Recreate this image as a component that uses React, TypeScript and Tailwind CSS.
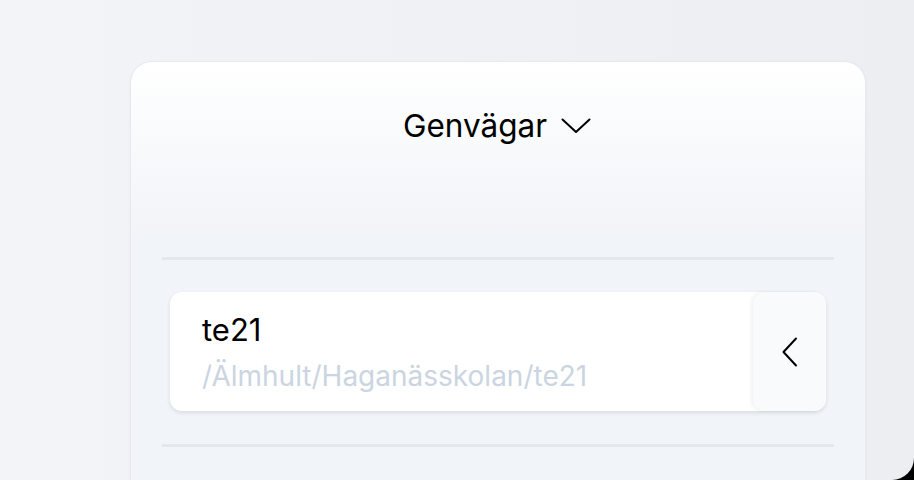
import React from "react";

export default function App() {
  return (
    <div className="w-[914px] h-[480px] bg-black overflow-hidden" style={{ fontFamily: "Inter, 'Noto Sans', sans-serif" }}>
      <div className="w-full h-full rounded-br-[22px] bg-gradient-to-r from-[#f3f4f7] to-[#eceef2] pt-[61px] pl-[130px] overflow-hidden">
        <div className="w-[736px] h-[440px] rounded-t-[22px] border border-[#e6e9ee] bg-gradient-to-b from-white to-[#f1f4f8] to-[40%] shadow-[0_1px_3px_rgba(0,0,0,0.04)] px-[31px]">
          <div className="h-[195px] pt-[44px] flex justify-center">
            <div className="flex items-center gap-[14px] h-[40px] text-black mr-[2px]">
              <span className="text-[31.5px] leading-none">Genvägar</span>
              <svg width="30" height="16" viewBox="0 0 30 16" fill="none">
                <polyline points="1.5,1.5 15,14 28.5,1.5" stroke="black" strokeWidth="2" strokeLinecap="round" strokeLinejoin="round" />
              </svg>
            </div>
          </div>
          <div className="h-[3px] bg-[#e4e7ec]" />
          <div className="mt-[32px] mx-[8px] h-[119px] flex rounded-[12px] bg-white shadow-[0_2px_4px_rgba(0,0,0,0.1)]">
            <div className="flex-1 pl-[32px] pt-[20px]">
              <div className="text-[31px] leading-[36px] text-black">te21</div>
              <div className="text-[28px] leading-[34px] mt-[11px] text-[#cbd5e1]">/Älmhult/Haganässkolan/te21</div>
            </div>
            <div className="w-[73px] rounded-[12px] bg-[#f8fafc] shadow-[-2px_0_4px_rgba(0,0,0,0.06)] flex items-center justify-center">
              <svg width="16" height="30" viewBox="0 0 16 30" fill="none">
                <polyline points="14,1.5 1.5,15 14,28.5" stroke="black" strokeWidth="2" strokeLinecap="round" strokeLinejoin="round" />
              </svg>
            </div>
          </div>
          <div className="mt-[33px] h-[3px] bg-[#e4e7ec]" />
        </div>
      </div>
    </div>
  );
}
